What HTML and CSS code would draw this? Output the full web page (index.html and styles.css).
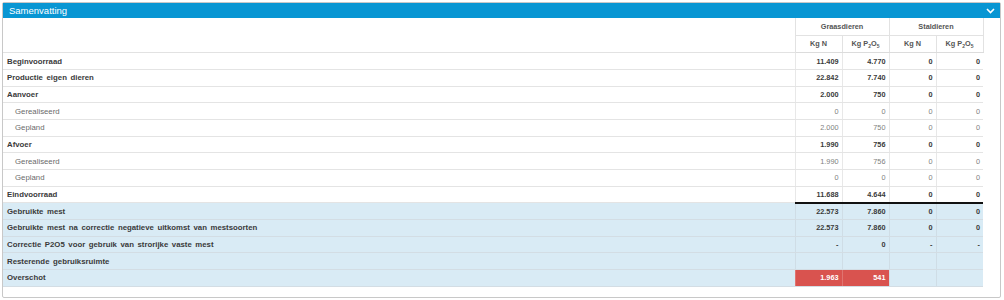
FILE: index.html
```html
<!DOCTYPE html>
<html lang="nl">
<head>
<meta charset="utf-8">
<title>Samenvatting</title>
<link rel="stylesheet" href="styles.css">
</head>
<body>
<div class="panel">
  <div class="panel-head">
    <span class="panel-title">Samenvatting</span>
    <svg class="chevron" width="9" height="6" viewBox="0 0 9 6"><polyline points="1,1 4.5,4.5 8,1" fill="none" stroke="#fff" stroke-width="1.6"/></svg>
  </div>
  <div class="panel-body">
    <table class="summary">
      <colgroup>
        <col class="c-label"><col class="c-num"><col class="c-num"><col class="c-num"><col class="c-num">
      </colgroup>
      <thead>
        <tr class="h1">
          <th class="blank" rowspan="2"></th>
          <th colspan="2">Graasdieren</th>
          <th colspan="2">Staldieren</th>
        </tr>
        <tr class="h2">
          <th>Kg N</th><th>Kg P<sub>2</sub>O<sub>5</sub></th>
          <th>Kg N</th><th>Kg P<sub>2</sub>O<sub>5</sub></th>
        </tr>
      </thead>
      <tbody>
        <tr class="main"><td class="lbl">Beginvoorraad</td><td>11.409</td><td>4.770</td><td>0</td><td>0</td></tr>
        <tr class="main"><td class="lbl">Productie eigen dieren</td><td>22.842</td><td>7.740</td><td>0</td><td>0</td></tr>
        <tr class="main"><td class="lbl">Aanvoer</td><td>2.000</td><td>750</td><td>0</td><td>0</td></tr>
        <tr class="sub"><td class="lbl">Gerealiseerd</td><td>0</td><td>0</td><td>0</td><td>0</td></tr>
        <tr class="sub"><td class="lbl">Gepland</td><td>2.000</td><td>750</td><td>0</td><td>0</td></tr>
        <tr class="main"><td class="lbl">Afvoer</td><td>1.990</td><td>756</td><td>0</td><td>0</td></tr>
        <tr class="sub"><td class="lbl">Gerealiseerd</td><td>1.990</td><td>756</td><td>0</td><td>0</td></tr>
        <tr class="sub"><td class="lbl">Gepland</td><td>0</td><td>0</td><td>0</td><td>0</td></tr>
        <tr class="main total"><td class="lbl">Eindvoorraad</td><td>11.688</td><td>4.644</td><td>0</td><td>0</td></tr>
        <tr class="main info"><td class="lbl">Gebruikte mest</td><td>22.573</td><td>7.860</td><td>0</td><td>0</td></tr>
        <tr class="main info"><td class="lbl">Gebruikte mest na correctie negatieve uitkomst van mestsoorten</td><td>22.573</td><td>7.860</td><td>0</td><td>0</td></tr>
        <tr class="main info"><td class="lbl">Correctie P2O5 voor gebruik van strorijke vaste mest</td><td class="dash">-</td><td>0</td><td class="dash">-</td><td class="dash">-</td></tr>
        <tr class="main info"><td class="lbl">Resterende gebruiksruimte</td><td></td><td></td><td></td><td></td></tr>
        <tr class="main info"><td class="lbl">Overschot</td><td class="danger">1.963</td><td class="danger">541</td><td></td><td></td></tr>
      </tbody>
    </table>
  </div>
</div>
</body>
</html>
```

FILE: styles.css
```css
html, body {
  margin: 0;
  padding: 0;
  background: #fff;
}

body {
  font-family: "Liberation Sans", Arial, sans-serif;
}

.panel {
  margin: 2px 3px 2px 2px;
  border: 1px solid #c8c8c8;
  border-radius: 2px;
  background: #fff;
}

.panel-head {
  height: 15px;
  background: #0896d3;
  display: flex;
  align-items: center;
  justify-content: space-between;
  padding: 0 5px 0 6px;
}

.panel-title {
  color: #fff;
  font-size: 9.5px;
  line-height: 15px;
}

.chevron {
  display: block;
}

.panel-body {
  padding: 0 17px 10px 0;
}

.summary {
  width: 980px;
  border-collapse: collapse;
  table-layout: fixed;
  font-size: 7.3px;
  color: #333;
}

.c-label { width: 792px; }
.c-num { width: 47px; }

.summary th {
  font-weight: bold;
  color: #555;
  text-align: center;
  padding: 0 3px;
  border-left: 1px solid #e2e2e2;
  border-right: 1px solid #e2e2e2;
}

.summary th.blank {
  border-left: none;
}

.summary .h1 { height: 17px; }
.summary .h1 th { border-bottom: 1px solid #e2e2e2; }
.summary .h2 { height: 17.7px; }
.summary .h2 th { border-bottom: 1px solid #dcdcdc; }

.summary sub {
  font-size: 5px;
  vertical-align: -1.5px;
  line-height: 0;
}

.summary tbody tr {
  height: 16.7px;
}

.summary td {
  border-bottom: 1px solid #e4e4e4;
  border-left: 1px solid #e8e8e8;
  text-align: right;
  padding: 0 3px;
  white-space: nowrap;
}

.summary td.lbl {
  text-align: left;
  border-left: none;
  padding-left: 4px;
  font-size: 7.8px;
  word-spacing: 1.4px;
}

.summary tr.main td {
  font-weight: bold;
  color: #3a3a3a;
}

.summary tr.sub td {
  font-weight: normal;
  color: #808080;
}

.summary tr.sub td.lbl {
  color: #6a6a6a;
  padding-left: 12px;
}

.summary tr.total td:not(.lbl) {
  border-bottom: 2px solid #111;
}

.summary tr.info td {
  background: #d9ebf5;
  border-bottom-color: #d3dde4;
  border-left-color: #cfdde6;
}

.summary td.dash {
  color: #8a9aa5;
  font-weight: normal;
}

.summary tr.info td.danger {
  background: #d9534f;
  color: #fff;
  border-left-color: #e07470;
}
```
